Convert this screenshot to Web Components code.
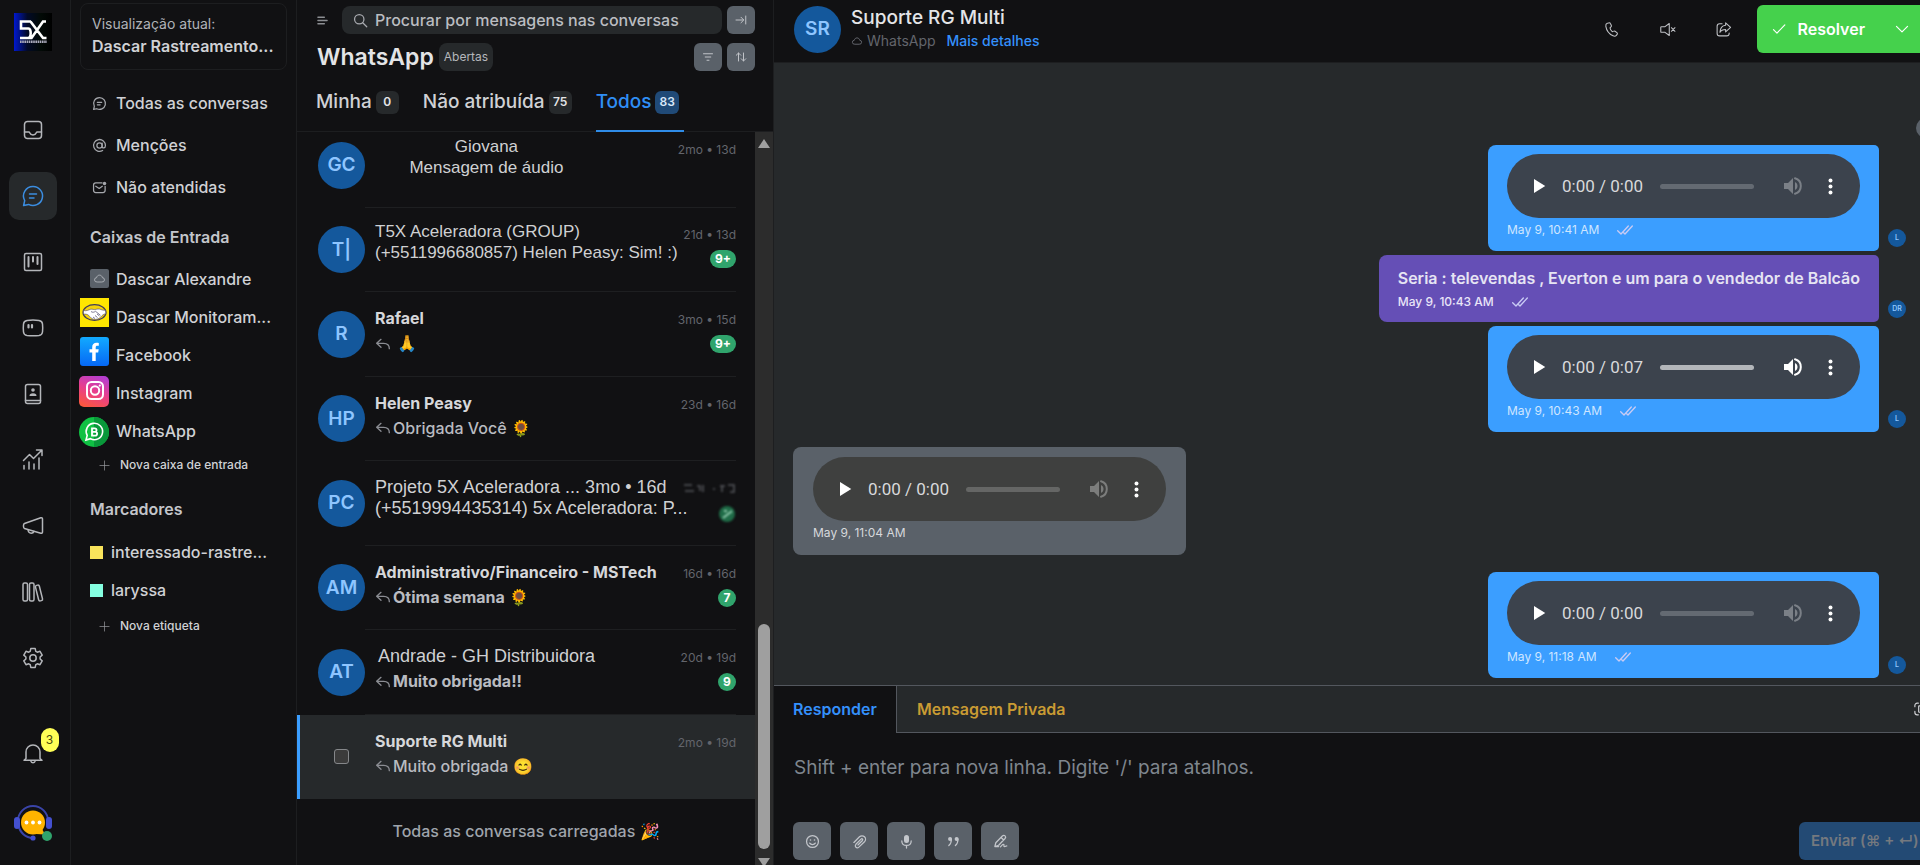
<!DOCTYPE html>
<html lang="pt-BR">
<head>
<meta charset="utf-8">
<title>Conversas - WhatsApp</title>
<style>
  :root {
    --bg: #111113;
    --panel: #26292b;
    --line: #1d1e20;
    --edge: #53575e;
    --text: #d0d1d5;
    --muted: #63656c;
    --slate: #5a6169;
    --blue: #3b9eff;
    --avatar: #14589c;
    --avatar-text: #8ec5ff;
  }
  html, body { height: 100%; margin: 0; }
  body {
    box-sizing: border-box;
    padding-bottom: 3px;
    background: #fff;
    color: var(--text);
    font: 16px/24px Inter, "Liberation Sans", sans-serif;
    overflow: hidden;
  }
</style>
</head>
<body>
<support-app></support-app>

<script>
const ICONS = {
  inbox: '<rect x="3.5" y="3.5" width="17" height="17" rx="3"/><path d="M3.5 14h4.2c.6 0 .8.3 1 .8.5 1.300 1.700 2.200 3.300 2.200s2.800-.9 3.300-2.200c.2-.5.4-.8 1-.8h4.200"/>',
  chat: '<path d="M12 2.500a9.500 9.500 0 1 1-4.400 17.900L2.600 21.500l1.100-4.900A9.500 9.500 0 0 1 12 2.500z"/><path d="M8.500 10h7M8.500 14h4.500"/>',
  kanban: '<rect x="3.500" y="3.500" width="17" height="17" rx="1.500"/><path d="M7.500 7v9.500M12 7v4.500M16.500 7v7" stroke-width="2"/>',
  captain: '<path d="M6 4.500C9.500 4 14.500 4 18 4.500c2 .3 3.300 1.500 3.500 3.500.3 2.700.3 5.300 0 8-.2 2-1.500 3.200-3.500 3.500-3.500.4-8.500.4-12 0-2-.3-3.300-1.500-3.500-3.500-.3-2.700-.3-5.300 0-8C2.700 6 4 4.800 6 4.500z"/><path d="M7.500 9v2.500M11 9v2.500" stroke-width="2.200"/>',
  contacts: '<rect x="4.500" y="2.500" width="15" height="19" rx="2"/><path d="M4.500 18.500h15"/><circle cx="12" cy="8" r="1.800" fill="currentColor" stroke="none"/><path d="M8.500 14c0-2 1-2.800 3.500-2.800s3.500.8 3.500 2.800z" fill="currentColor" stroke="none"/>',
  reports: '<path d="M3 21v-3.500M8 21v-7M13 21v-5M18 21V10M2.500 12.500l6-6 4 4 8.500-8.500M15.500 2h5.500v5.500"/>',
  megaphone: '<path d="M3.500 9.500 19.800 3.800c.9-.3 1.700.3 1.700 1.200v13c0 .9-.8 1.500-1.700 1.200L3.500 14.500c-1.400-.6-1.400-4.400 0-5z"/><path d="M7 15.800c.2 2 1.500 3.400 3.200 3.400 1.300 0 2.300-.6 2.800-1.800"/>',
  library: '<rect x="2" y="3" width="4.500" height="18" rx="1.500"/><rect x="8.500" y="3" width="4.500" height="18" rx="1.500"/><rect x="16" y="5" width="4" height="16" rx="1.500" transform="rotate(-14 18 13)"/>',
  gear: '<path d="M9.800 2.600h4.400l.6 2.700 1.500.9 2.700-.9 2.200 3.800-2.100 1.900v2l2.100 1.900-2.200 3.800-2.700-.9-1.500.9-.6 2.700H9.800l-.6-2.700-1.500-.9-2.700.9-2.200-3.800L4.900 13v-2L2.800 9.100 5 5.300l2.700.9 1.500-.9z"/><circle cx="12" cy="12" r="3.200"/>',
  bell: '<path d="M5 17.500V11a7 7 0 0 1 14 0v6.500l2 1.700H3z"/><path d="M10 20.500c.3.700 1 1.200 2 1.200s1.700-.5 2-1.200"/>',
  at: '<circle cx="12" cy="12" r="4.200"/><path d="M16.200 8v5.500c0 3.800 5.300 3 5.300-1.500A9.500 9.500 0 1 0 17 20"/>',
  mail: '<path d="M16 4.500H6A3.500 3.500 0 0 0 2.500 8v8.500A3.500 3.500 0 0 0 6 20h11.500a3.500 3.500 0 0 0 3.500-3.500V10M6 10l5.500 3.500L16.500 10"/><circle cx="20" cy="5.500" r="2.800" fill="currentColor" stroke="none"/>',
  cloud: '<path d="M7 18.500a4 4 0 0 1-.4-8c.6-3 2.800-4.700 5.400-4.700s4.800 1.700 5.400 4.700a4 4 0 0 1-.4 8z"/>',
  plus: '<path d="M12 2v20M2 12h20"/>',
  menu: '<path d="M2 5h14M2 12h20M2 19h14" stroke-width="3"/>',
  search: '<circle cx="10" cy="10" r="7.500"/><path d="m15.500 15.500 6.500 6.500"/>',
  collapse: '<path d="M2 12h15M12 6.500l5.500 5.500-5.500 5.500M21.500 4v16"/>',
  filter: '<path d="M3 5.500h18M6.500 12h11M10 18.500h4"/>',
  sort: '<path d="M7 20V4M2.500 8.500 7 4l4.500 4.500M17 4v16M12.500 15.500 17 20l4.500-4.500"/>',
  reply: '<path d="M9 5 2.500 11 9 17M2.500 11H13c5 0 8.500 3 8.500 8"/>',
  phone: '<path d="M7.600 2.800 6 3.300C4.500 3.900 3.700 5.500 4 7.500c1 6 4.600 10.800 10.200 13.400 1.900.9 3.600.6 4.700-.7l1-1.200c.6-.8.500-1.900-.3-2.500l-2.700-2c-.6-.4-1.300-.5-1.900-.2l-2 .8c-1.600-1.300-2.700-3.200-3.100-5.300L11.500 8c.4-.5.5-1.200.3-1.800L10.600 3.800C10.200 2.900 9 2.300 7.600 2.800z"/>',
  mute: '<path d="M14.500 3.500v17L8.500 16H3.500a1 1 0 0 1-1-1V9a1 1 0 0 1 1-1h5z"/><path d="m17.500 9.500 5 5m0-5-5 5"/>',
  share: '<path d="M10 4H6.500A3.500 3.500 0 0 0 3 7.500v10A3.500 3.500 0 0 0 6.500 21h10a3.500 3.500 0 0 0 3.500-3.500V17"/><path d="M15 2.500 22 9l-7 6.500V12c-4 0-6.500 1-8 4 .2-5.500 3-9.500 8-10z"/>',
  check: '<path d="m2.500 13 6 6L22 5"/>',
  chevron: '<path d="m2.500 7.500 9.500 9.500 9.500-9.500"/>',
  ticks: '<path d="m1 13 5 5L17 6M10 16l2 2L23 6"/>',
  play: '<path d="M6 3.500v17L19.500 12z" fill="currentColor" stroke="none"/>',
  volume: '<path d="M3 9v6h4l5 5V4L7 9z" fill="currentColor" stroke="none"/><path d="M14 8c1.500.7 2.500 2.200 2.500 4s-1 3.300-2.500 4z" fill="currentColor" stroke="none"/><path d="M14 4.300c3.400 1 5.800 4 5.800 7.700s-2.400 6.700-5.800 7.700" stroke-width="2"/>',
  dots: '<g fill="currentColor" stroke="none"><circle cx="12" cy="3.500" r="2.800"/><circle cx="12" cy="12" r="2.800"/><circle cx="12" cy="20.500" r="2.800"/></g>',
  smile: '<circle cx="12" cy="12" r="9.500"/><path d="M7.500 14.500c1 1.500 2.600 2.300 4.500 2.300s3.500-.8 4.500-2.300"/><circle cx="8.800" cy="9.500" r="1.300" fill="currentColor" stroke="none"/><circle cx="15.200" cy="9.500" r="1.300" fill="currentColor" stroke="none"/>',
  clip: '<path d="m3 13.500 9-9a5.500 5.500 0 0 1 8 8l-9 8.500c-3.500 3-7.500-1-4.800-4.500l8.300-8.300c1.600-1.400 3.600.4 2.200 2.100l-7.200 7.200"/>',
  mic: '<rect x="8" y="1.500" width="8" height="13" rx="4" fill="currentColor" stroke="none"/><path d="M4.500 11c0 4.500 3 7.200 7.500 7.200s7.500-2.700 7.500-7.200M12 18v4.500" stroke-width="2"/>',
  quote: '<g fill="currentColor" stroke="none"><circle cx="6.500" cy="8" r="3.200"/><circle cx="17" cy="8" r="3.200"/></g><path d="M8.700 8c0 5-1.200 8-4.200 10.500M19.200 8c0 5-1.200 8-4.200 10.500" stroke-width="2"/>',
  sign: '<path d="m3 20 1.500-6L15 3.200c3-2.700 7 1 4.300 4L9 18z M13 5.500l4 4M12 20.500c3-3.500 5-5 5.500-3.500s-1 3 1 3 1.500-1 3.500-1M3 20h6"/>',
  expand: '<path d="M1.500 8V6A4 4 0 0 1 5.500 2h2M16 2h2a4 4 0 0 1 4 4v2M1.500 16v2a4 4 0 0 0 4 4h2M16 22h2a4 4 0 0 0 4-4v-2"/><rect x="8" y="6.500" width="12" height="11" rx="1"/>'
};

function define(name, css, html) {
  customElements.define(name, class extends HTMLElement {
    constructor() {
      super();
      const root = this.attachShadow({ mode: 'open' });
      const markup = typeof html === 'function' ? html(this) : html;
      root.innerHTML = `<style>*{box-sizing:border-box}button{font:inherit;color:inherit;border:0;margin:0;padding:0;cursor:pointer}a{color:inherit;text-decoration:none}${css}</style>${markup}`;
    }
  });
}

/* Line icon: <ui-icon name="chat" style="--s:20px"> */
define('ui-icon', `
  :host { display: inline-block; flex: none; width: var(--s, 24px); height: var(--s, 24px); }
  svg { display: block; width: 100%; height: 100%; overflow: visible; fill: none; stroke: currentColor; stroke-width: var(--w, 1.5); stroke-linecap: round; stroke-linejoin: round; }
`, el => `<svg viewBox="0 0 24 24" aria-hidden="true">${ICONS[el.getAttribute('name')]}</svg>`);

/* Round avatar with initials */
define('user-avatar', `
  :host { display: grid; place-items: center; flex: none; width: 47px; height: 47px; border-radius: 50%; background: var(--avatar); color: var(--avatar-text); font-size: 19px; line-height: 20px; font-weight: 600; }
  :host([small]) { width: 18px; height: 18px; font-size: 7px; line-height: 8px; }
`, '<slot></slot>');

define('nav-rail', `
  :host { display: flex; flex-direction: column; align-items: center; width: 71px; padding: 13px 5px 22px 0; border-right: 1px solid var(--line); color: #b4b6ba; }
  .logo { width: 38px; height: 38px; margin-bottom: 55px; }
  .logo svg, .me svg { display: block; }
  nav { display: flex; flex-direction: column; gap: 18px; }
  nav a, .bell { display: grid; place-items: center; width: 48px; height: 48px; border-radius: 10px; }
  nav a.on { background: var(--panel); color: #3b8de0; }
  .bell { position: relative; background: none; margin-top: auto; }
  .bell span { position: absolute; left: 32px; top: -1px; width: 18px; height: 24px; border-radius: 9px; background: #ffff57; color: #47490f; font-size: 12px; line-height: 24px; text-align: center; }
  .me { margin-top: 28px; background: none; }
`, `
  <a class="logo" href="#" aria-label="5X">
    <svg width="38" height="38" viewBox="0 0 38 38"><defs><linearGradient id="g"><stop offset="0" stop-color="#0018d0"/><stop offset=".35" stop-color="#020a28"/><stop offset=".7" stop-color="#020a06"/><stop offset="1" stop-color="#000"/></linearGradient></defs>
    <rect width="38" height="38" fill="url(#g)"/><path d="M17 8.500H7v7h7.500c3 0 3 9.500-.5 9.500H6M16.500 8.500l12.500 16.500h3.500M32 8.500h-3L17.500 25H14" fill="none" stroke="#fff" stroke-width="2.600"/><path d="M6 28.700h27" stroke="#aab" stroke-width="2.400" stroke-dasharray="1.600 .6"/></svg>
  </a>
  <nav>
    <a href="#" aria-label="Caixa de entrada"><ui-icon name="inbox"></ui-icon></a>
    <a href="#" aria-label="Conversas" class="on"><ui-icon name="chat"></ui-icon></a>
    <a href="#" aria-label="Kanban"><ui-icon name="kanban"></ui-icon></a>
    <a href="#" aria-label="Assistente"><ui-icon name="captain"></ui-icon></a>
    <a href="#" aria-label="Contatos"><ui-icon name="contacts"></ui-icon></a>
    <a href="#" aria-label="Relatórios"><ui-icon name="reports"></ui-icon></a>
    <a href="#" aria-label="Campanhas"><ui-icon name="megaphone"></ui-icon></a>
    <a href="#" aria-label="Central de ajuda"><ui-icon name="library"></ui-icon></a>
    <a href="#" aria-label="Configurações"><ui-icon name="gear"></ui-icon></a>
  </nav>
  <button class="bell" aria-label="Notificações"><ui-icon name="bell"></ui-icon><span>3</span></button>
  <button class="me" aria-label="Perfil">
    <svg width="38" height="38" viewBox="0 0 38 38"><path d="M4 16a15 15 0 0 1 30 0M4.500 20A15 15 0 0 0 19 33" fill="none" stroke="#3a44a8" stroke-width="2"/><rect x="0" y="12" width="6" height="12" rx="3" fill="#4450d0"/><rect x="32" y="12" width="6" height="12" rx="3" fill="#4450d0"/><circle cx="19" cy="33" r="2.600" fill="#4450d0"/><circle cx="19" cy="17.500" r="12" fill="#ffb300"/><path d="m27 22 4 7.500-9-.5z" fill="#ffb300"/><g fill="#fff"><circle cx="12.500" cy="17.500" r="1.900"/><circle cx="19" cy="17.500" r="1.900"/><circle cx="25.500" cy="17.500" r="1.900"/></g><circle cx="33" cy="31" r="5" fill="#30a46c"/></svg>
  </button>
`);

define('side-menu', `
  :host { display: block; width: 226px; padding: 3px 9px 0; border-right: 1px solid var(--line); font-weight: 500; }
  .view { display: block; height: 67px; padding: 9px 11px; border: 1px solid var(--line); border-radius: 8px; }
  .view small { display: block; font-size: 14px; line-height: 22px; font-weight: 400; color: #b0b3b8; }
  .view b { display: block; font-weight: 600; font-size: 16px; line-height: 22px; }
  a { white-space: nowrap; }
  .main { margin-top: 12px; }
  .main a { display: flex; align-items: center; gap: 9px; height: 42px; padding-left: 12px; }
  .main ui-icon { --s: 15px; --w: 2; color: #a5a7ac; }
  h2 { margin: 0; padding-left: 10px; font-size: 16px; line-height: 24px; font-weight: 600; color: #c3c5ca; }
  .main + h2 { margin-top: 17px; }
  .inboxes { display: grid; grid-template-columns: 30px 1fr; column-gap: 7px; margin: 11px 0 0 -1px; }
  .pics { display: flex; flex-direction: column; align-items: flex-end; gap: 10px; padding-top: 9px; }
  .pics svg { display: block; }
  .pics span { display: grid; place-items: center; width: 19px; height: 19px; border-radius: 2px; background: var(--slate); color: #b9bcc1; }
  .pics span ui-icon { --s: 13px; }
  .names a { display: block; line-height: 38px; }
  .new { display: flex; align-items: center; gap: 10px; padding-left: 19px; height: 30px; font-size: 12px; font-weight: 500; background: none; }
  .new ui-icon { --s: 11px; color: #9a9ca1; }
  .new + h2 { margin-top: 17px; }
  .tags { margin: 12px 0 2px; }
  .tags a { display: flex; align-items: center; gap: 8px; height: 38px; padding-left: 10px; }
  .tags i { width: 13px; height: 13px; background: var(--c); }
`, `
  <a class="view" href="#"><small>Visualização atual:</small><b>Dascar Rastreamento...</b></a>
  <nav class="main">
    <a href="#"><ui-icon name="chat"></ui-icon>Todas as conversas</a>
    <a href="#"><ui-icon name="at"></ui-icon>Menções</a>
    <a href="#"><ui-icon name="mail"></ui-icon>Não atendidas</a>
  </nav>
  <h2>Caixas de Entrada</h2>
  <div class="inboxes">
    <div class="pics">
      <span><ui-icon name="cloud"></ui-icon></span>
      <svg width="29" height="29" viewBox="0 0 29 29"><rect width="29" height="29" fill="#ffe600"/><ellipse cx="14.500" cy="14.500" rx="11.500" ry="7.800" fill="#f4d20c" stroke="#3f3a5a" stroke-width="1.200"/><path d="M3.500 12.500c3 .8 5-.6 7-1.200 1.500-.4 2.800.3 4 .3s3-.9 5-.5c2 .5 3.500 1.600 6 1.100l.3 3.600c-2 0-3.500 1.300-5 3.200-2 2.200-5 2.600-7 2.200-2.500-.5-4-2.500-5.300-4-1.300-1-3-1.200-5-1.100z" fill="#fff" stroke="#4a466a" stroke-width=".6"/><path d="M11 13.500c1.500 1.200 3 .8 4.500-.2l5 4M13 19l2 1.500M15 17.500l2.500 2M17 16l2.500 2" stroke="#4a466a" stroke-width=".7" fill="none"/></svg>
      <svg width="29" height="29" viewBox="0 0 29 29"><defs><linearGradient id="f" x2="0" y2="1"><stop stop-color="#12aaff"/><stop offset="1" stop-color="#0668f5"/></linearGradient></defs><rect width="29" height="29" rx="3" fill="url(#f)"/><path d="M12.200 24v-8.500H9.500v-3.300h2.700v-2c0-3 1.600-4.500 4.400-4.500.9 0 1.600.1 2.200.2v2.900h-1.500c-1.200 0-1.600.6-1.600 1.600v1.800h3l-.5 3.300h-2.500V24z" fill="#fff"/></svg>
      <svg width="30" height="31" viewBox="0 0 30 31"><defs><linearGradient id="i" x1=".7" x2=".3" y2="1"><stop stop-color="#b63ed0"/><stop offset=".5" stop-color="#e83f8c"/><stop offset="1" stop-color="#fb5640"/></linearGradient></defs><rect width="30" height="31" rx="5" fill="url(#i)"/><g fill="none" stroke="#fff" stroke-width="2"><rect x="8" y="6" width="16" height="17" rx="4.500"/><circle cx="16" cy="14.500" r="4.200"/></g><circle cx="20.800" cy="9.600" r="1.100" fill="#fff"/></svg>
      <svg width="30" height="30" viewBox="0 0 30 30"><circle cx="15" cy="15" r="15" fill="#0fc143"/><path d="M15 0a15 15 0 0 1 0 30z" fill="#09983a"/><path d="M7 23l1.200-4.600a8.200 8.200 0 1 1 3.300 3.300z" fill="none" stroke="#fff" stroke-width="1.600"/><path d="M13 11.300h2.800a1.700 1.700 0 0 1 0 3.500H13zm0 3.500h3.200a1.900 1.900 0 0 1 0 3.800H13z" fill="none" stroke="#fff" stroke-width="1.800"/></svg>
    </div>
    <div class="names">
      <a href="#">Dascar Alexandre</a>
      <a href="#">Dascar Monitoram...</a>
      <a href="#">Facebook</a>
      <a href="#">Instagram</a>
      <a href="#">WhatsApp</a>
    </div>
  </div>
  <button class="new"><ui-icon name="plus"></ui-icon>Nova caixa de entrada</button>
  <h2>Marcadores</h2>
  <div class="tags">
    <a href="#"><i style="--c:#f9e45b"></i>interessado-rastre...</a>
    <a href="#"><i style="--c:#85ffe0"></i>laryssa</a>
  </div>
  <button class="new"><ui-icon name="plus"></ui-icon>Nova etiqueta</button>
`);

define('conversation-item', `
  :host { display: flex; min-width: 0; min-height: 0; padding-right: 19px; border-left: 3px solid transparent; }
  .lead { display: grid; place-items: center; flex: none; width: 65px; padding-left: 18px; }
  .body { flex: 1; min-width: 0; display: flex; gap: 4px; padding: 14px 0 0 10px; border-bottom: 1px solid #1e1f21; white-space: nowrap; }
  .text { flex: 1; min-width: 0; font-size: 16px; line-height: 25px; font-weight: 500; color: #b9bbc0; }
  .text b { display: block; font-weight: 700; color: #d6d7da; }
  .msg { display: flex; align-items: center; gap: 2px; }
  .msg ui-icon { --s: 16px; --w: 2; color: #8b8d93; }
  :host([unread]) .msg { font-weight: 700; }
  .side { display: flex; flex-direction: column; align-items: flex-end; gap: 3px; padding-top: 1px; color: var(--muted); font-size: 12px; line-height: 25px; }
  ::slotted([slot=count]) { min-width: 18px; height: 18px; padding: 0 5px; border-radius: 9px; background: #30a46c; color: #fff; font-size: 12px; line-height: 18px; font-weight: 700; text-align: center; }
  :host([plain]) .text { font-family: "Liberation Sans", Arial, sans-serif; font-size: 17px; line-height: 21px; font-weight: 400; color: #cfd0d2; }
  :host([plain]) .text b { font-weight: 400; color: inherit; }
  :host([plain=""]) .body, :host([plain=center]) .body { padding-top: 13px; }
  :host([plain=large]) .text { font-size: 18px; padding-top: 2px; }
  :host([plain=center]) .text { padding-right: 76px; text-align: center; }
  :host([plain=center]) .msg { justify-content: center; }
  :host([plain=name]) .text b { font: 18px/25px "Liberation Sans", Arial, sans-serif; padding-left: 3px; color: #cfd0d2; }
  :host([plain=name]) .text { font: inherit; line-height: 25px; color: #b9bbc0; }
  :host([selected]) { background: var(--panel); border-left-color: var(--blue); }
  :host([selected]) .body { border-color: transparent; }
`, el => `
  <div class="lead"><slot name="lead"></slot></div>
  <div class="body">
    <div class="text"><b><slot name="name"></slot></b><div class="msg">${el.hasAttribute('noreply') ? '' : '<ui-icon name="reply"></ui-icon>'}<slot></slot></div></div>
    <div class="side"><slot name="time"></slot><slot name="count"></slot></div>
  </div>
`);

define('scroll-track', `
  :host { display: flex; flex-direction: column; align-items: center; width: 18px; background: #2c2c2c; }
  i { width: 0; height: 0; border: 6px solid transparent; }
  .up { border-top: 0; border-bottom: 9px solid #9f9f9f; margin-top: 7px; }
  .down { border-bottom: 0; border-top: 9px solid #9f9f9f; margin-bottom: -2px; }
  .track { flex: 1; width: 12px; display: flex; flex-direction: column; padding: 9px 0; }
  .space { flex: 469; }
  .thumb { flex: 226; border-radius: 6px; background: #9f9f9f; }
`, `<i class="up"></i><div class="track"><div class="space"></div><div class="thumb"></div></div><i class="down"></i>`);

define('conversation-list', `
  :host { display: flex; flex-direction: column; width: 477px; border-right: 1px solid var(--line); }
  header { padding: 6px 18px 0 20px; }
  .row { display: flex; align-items: center; gap: 5px; height: 28px; }
  .row + .row { margin-top: 9px; }
  .menu { background: none; margin-right: 9px; display: flex; }
  .menu ui-icon { --s: 11px; color: #8c8e92; }
  .search { flex: 1; display: flex; align-items: center; gap: 7px; height: 28px; padding: 0 11px; border-radius: 8px; background: var(--panel); font-weight: 500; }
  .search ui-icon { --s: 15px; --w: 2; color: #a9abb0; }
  input[type=search] { flex: 1; min-width: 0; border: 0; padding: 0; outline: 0; background: none; color: inherit; font: inherit; }
  input::placeholder { color: #bbbdc1; opacity: 1; }
  .sq { display: grid; place-items: center; width: 28px; height: 28px; border-radius: 6px; background: var(--slate); color: #c0c3c8; }
  .sq ui-icon { --s: 12px; --w: 2; }
  h1 { margin: 0; font-size: 23px; line-height: 28px; font-weight: 600; color: #e3e4e6; }
  .state { height: 28px; padding: 0 5px; border-radius: 8px; background: var(--panel); color: #b5b7bb; font-size: 12px; line-height: 28px; }
  .grow { flex: 1; }
  .tabs { display: flex; gap: 22px; height: 61px; padding: 0 19px; border-bottom: 1px solid var(--line); font-size: 19px; font-weight: 500; white-space: nowrap; }
  .tabs button { display: flex; align-items: center; gap: 4px; background: none; height: 61px; padding-top: 3px; border-bottom: 2px solid transparent; padding-right: 2px; }
  .tabs button.on { color: #2f8ef5; border-color: #2f8ce8; padding-right: 5px; }
  .tabs em { min-width: 23px; height: 23px; padding: 0 4px; border-radius: 6px; background: var(--panel); color: #e4e5e7; font: 600 12px/21px Inter, sans-serif; text-align: center; }
  .tabs .on em { background: #204a77; color: #dbe9fa; }
  .scroll { flex: 1; min-height: 0; display: flex; overflow: hidden; }
  .list { flex: 1; min-width: 0; display: flex; flex-direction: column; margin-top: -9px; }
  .items { flex: 1; min-height: 0; display: grid; grid-template-columns: minmax(0, 1fr); grid-auto-rows: 1fr; }
  .end { margin: 0; height: 66px; line-height: 64px; text-align: center; font-weight: 500; color: #9fa4ab; }
  input[type=checkbox] { appearance: none; width: 15px; height: 15px; margin: 0; border: 1px solid #85878a; border-radius: 3px; background: #3b3b3b; }
  .smudge { display: block; filter: blur(1px); }
`, `
  <header>
    <div class="row">
      <button class="menu" aria-label="Menu"><ui-icon name="menu"></ui-icon></button>
      <label class="search"><ui-icon name="search"></ui-icon><input type="search" aria-label="Procurar" placeholder="Procurar por mensagens nas conversas"></label>
      <button class="sq" aria-label="Recolher"><ui-icon name="collapse"></ui-icon></button>
    </div>
    <div class="row">
      <h1>WhatsApp</h1><span class="state">Abertas</span><span class="grow"></span>
      <button class="sq" aria-label="Filtrar"><ui-icon name="filter"></ui-icon></button>
      <button class="sq" aria-label="Ordenar"><ui-icon name="sort"></ui-icon></button>
    </div>
  </header>
  <div class="tabs">
    <button>Minha <em>0</em></button>
    <button>Não atribuída <em>75</em></button>
    <button class="on">Todos <em>83</em></button>
  </div>
  <div class="scroll">
    <div class="list">
      <div class="items">
        <conversation-item plain="center" noreply><user-avatar slot="lead">GC</user-avatar><span slot="name">Giovana</span>Mensagem de áudio<span slot="time">2mo • 13d</span></conversation-item>
        <conversation-item plain noreply><user-avatar slot="lead">T|</user-avatar><span slot="name">T5X Aceleradora (GROUP)</span>(+5511996680857) Helen Peasy: Sim! :)<span slot="time">21d • 13d</span><span slot="count">9+</span></conversation-item>
        <conversation-item><user-avatar slot="lead">R</user-avatar><span slot="name">Rafael</span>&nbsp;🙏<span slot="time">3mo • 15d</span><span slot="count">9+</span></conversation-item>
        <conversation-item><user-avatar slot="lead">HP</user-avatar><span slot="name">Helen Peasy</span>Obrigada Você 🌻<span slot="time">23d • 16d</span></conversation-item>
        <conversation-item plain="large" noreply><user-avatar slot="lead">PC</user-avatar><span slot="name">Projeto 5X Aceleradora ... 3mo • 16d</span>(+5519994435314) 5x Aceleradora: P...<svg slot="time" class="smudge" width="52" height="48" viewBox="0 0 52 48"><path d="M0 9h8M1 15h9M13 10h3v5M19 9v7M29 13h2M36 10h5M38 10v6M44 9h6v7h-4" fill="none" stroke="#55575c" stroke-width="1.500"/><circle cx="43" cy="38" r="8" fill="#1f6b47"/><path d="M39 42l9-7M40 35h3" stroke="#8fc9ac" stroke-width="2"/></svg></conversation-item>
        <conversation-item unread><user-avatar slot="lead">AM</user-avatar><span slot="name">Administrativo/Financeiro - MSTech</span>Ótima semana 🌻<span slot="time">16d • 16d</span><span slot="count">7</span></conversation-item>
        <conversation-item plain="name" unread><user-avatar slot="lead">AT</user-avatar><span slot="name">Andrade - GH Distribuidora</span>Muito obrigada!!<span slot="time">20d • 19d</span><span slot="count">9</span></conversation-item>
        <conversation-item selected><input slot="lead" type="checkbox" aria-label="Selecionar Suporte RG Multi"><span slot="name">Suporte RG Multi</span>Muito obrigada 😊<span slot="time">2mo • 19d</span></conversation-item>
      </div>
      <p class="end">Todas as conversas carregadas 🎉</p>
    </div>
    <scroll-track></scroll-track>
  </div>
`);

define('audio-player', `
  :host { display: flex; align-items: center; width: 353px; height: 64px; padding: 0 20px 0 22px; border-radius: 32px; background: #3c434d; color: #fff; font-family: Roboto, sans-serif; font-size: 17px; font-weight: 400; }
  :host([tone=grey]) { background: #3f403f; }
  button { display: grid; place-items: center; width: 20px; height: 24px; background: none; }
  button ui-icon { --s: 20px; }
  time { margin-left: 13px; color: #d8d9db; white-space: nowrap; }
  input { appearance: none; flex: 1; min-width: 0; height: 5px; margin: 0 27px 0 17px; border-radius: 3px; background: #646a72; }
  input::-webkit-slider-thumb { appearance: none; width: 0; height: 0; }
  .vol { color: #7b8087; }
  .vol ui-icon { --s: 24px; }
  :host([loaded]) input { background: #b3b6ba; }
  :host([loaded]) .vol { color: #fff; }
  :host([tone=grey]) input { background: #656665; }
  :host([tone=grey]) .vol { color: #7c7d7c; }
  .more { margin-left: 19px; }
  .more ui-icon { --s: 17px; }
`, el => `
  <button aria-label="Reproduzir"><ui-icon name="play"></ui-icon></button>
  <time>${el.getAttribute('time')}</time>
  <input type="range" value="0" aria-label="Progresso">
  <button class="vol" aria-label="Volume"><ui-icon name="volume"></ui-icon></button>
  <button class="more" aria-label="Mais"><ui-icon name="dots"></ui-icon></button>
`);

define('chat-message', `
  :host { display: flex; align-items: flex-end; justify-content: flex-end; gap: 9px; font-weight: 600; }
  .bubble { padding: 9px 19px 11px; border-radius: 8px 5px 5px 8px; background: var(--blue); color: #e6e4f3; }
  :host([kind=in]) { justify-content: flex-start; }
  :host([kind=in]) .bubble { padding: 10px 20px 12px; border-radius: 8px; background: var(--slate); }
  :host([kind=note]) .bubble { background: #654fb6; padding: 11px 19px 10px; }
  .meta { display: flex; align-items: center; gap: 18px; height: 20px; margin-top: 2px; font-size: 12px; font-weight: 400; line-height: 20px; color: #cfe6ff; }
  :host([kind=in]) .meta { color: #d6d8dc; }
  :host([kind=note]) .meta { color: #e9e5f8; font-weight: 500; }
  .meta ui-icon { --s: 16px; --w: 2; color: #c9cbf4; }
  ::slotted(user-avatar) { margin-bottom: 4px; }
`, el => `
  <div class="bubble"><slot></slot><div class="meta"><span>${el.getAttribute('at')}</span>${el.getAttribute('kind') === 'in' ? '' : '<ui-icon name="ticks"></ui-icon>'}</div></div>
  <slot name="who"></slot>
`);

define('reply-box', `
  :host { display: flex; flex-direction: column; height: 180px; border-top: 1px solid var(--edge); overflow: hidden; }
  .tabs { display: flex; height: 47px; font-size: 16px; font-weight: 600; }
  .tabs button { background: none; line-height: 45px; }
  .reply { width: 123px; color: #3490fb; border-right: 1px solid var(--edge) !important; }
  .rest { flex: 1; display: flex; align-items: center; justify-content: space-between; padding-left: 20px; background: var(--panel); border-bottom: 1px solid var(--edge); }
  .rest .note { color: #c99b33; }
  .rest .expand { display: flex; width: 6px; }
  .expand ui-icon { --s: 14px; --w: 2; }
  textarea { flex: 1; min-height: 0; border: 0; outline: 0; resize: none; padding: 23px 20px 0; background: none; color: inherit; font: 19px/24px Inter, sans-serif; overflow: hidden; }
  textarea::placeholder { color: #7f868e; opacity: 1; }
  .tools { display: flex; gap: 9px; padding: 0 0 5px 19px; }
  .tools button { display: grid; place-items: center; width: 38px; height: 38px; border-radius: 6px; background: var(--slate); color: #c3c6cb; }
  .tools ui-icon { --s: 15px; --w: 2; }
  .tools .send { display: block; width: 140px; margin: 0 -19px 0 auto; padding-left: 12px; text-align: left; background: #234a74; color: #75797f; font-size: 15px; font-weight: 600; white-space: nowrap; }
`, `
  <div class="tabs">
    <button class="reply">Responder</button>
    <div class="rest"><button class="note">Mensagem Privada</button><button class="expand" aria-label="Expandir"><ui-icon name="expand"></ui-icon></button></div>
  </div>
  <textarea aria-label="Mensagem" placeholder="Shift + enter para nova linha. Digite '/' para atalhos."></textarea>
  <div class="tools">
    <button aria-label="Emoji"><ui-icon name="smile"></ui-icon></button>
    <button aria-label="Anexar"><ui-icon name="clip"></ui-icon></button>
    <button aria-label="Gravar áudio"><ui-icon name="mic"></ui-icon></button>
    <button aria-label="Citação"><ui-icon name="quote"></ui-icon></button>
    <button aria-label="Assinatura"><ui-icon name="sign"></ui-icon></button>
    <button class="send">Enviar (⌘ + ↵)</button>
  </div>
`);

define('chat-view', `
  :host { position: relative; flex: 1; min-width: 0; display: flex; flex-direction: column; overflow: hidden; }
  header { display: flex; align-items: center; height: 63px; padding: 0 0 4px 20px; border-bottom: 1px solid var(--line); }
  .who { margin-left: 10px; }
  h2 { margin: 0; font-size: 19px; line-height: 24px; font-weight: 500; color: #e4e5e8; }
  .sub { display: flex; align-items: center; font-size: 14px; line-height: 22px; color: var(--muted); }
  .sub ui-icon { --s: 12px; --w: 2; margin-right: 4px; }
  .sub a { margin-left: 11px; color: #3490fb; font-weight: 500; }
  .acts { display: flex; gap: 38px; margin: 0 24px 0 auto; }
  .acts button { display: grid; place-items: center; width: 18px; height: 24px; background: none; color: #c0c2c6; }
  .acts ui-icon { --s: 17px; }
  .resolve { display: flex; flex: none; height: 48px; margin-right: -9px; border-radius: 6px; background: #45d14c; color: #fff; font-weight: 600; }
  .resolve button { display: flex; align-items: center; gap: 12px; padding: 0 15px; background: none; font-size: 16px; }
  .resolve ui-icon { --s: 14px; --w: 2; }
  .resolve button + button { padding: 0 20px 0 15px; }
  .feed { flex: 1; min-height: 0; display: flex; flex-direction: column; justify-content: flex-end; gap: 17px; padding: 0 14px 7px 19px; background: var(--panel); overflow: hidden; }
  .group { display: flex; flex-direction: column; gap: 4px; margin-bottom: -2px; }
  .knob { position: absolute; right: -16px; top: 118px; width: 20px; height: 20px; border-radius: 50%; background: var(--slate); }
`, `
  <header>
    <user-avatar>SR</user-avatar>
    <div class="who">
      <h2>Suporte RG Multi</h2>
      <div class="sub"><ui-icon name="cloud"></ui-icon>WhatsApp<a href="#">Mais detalhes</a></div>
    </div>
    <div class="acts">
      <button aria-label="Ligar"><ui-icon name="phone"></ui-icon></button>
      <button aria-label="Silenciar"><ui-icon name="mute"></ui-icon></button>
      <button aria-label="Compartilhar"><ui-icon name="share"></ui-icon></button>
    </div>
    <div class="resolve"><button><ui-icon name="check"></ui-icon>Resolver</button><button aria-label="Mais opções"><ui-icon name="chevron"></ui-icon></button></div>
  </header>
  <div class="feed">
    <div class="group">
      <chat-message at="May 9, 10:41 AM"><audio-player time="0:00 / 0:00"></audio-player><user-avatar slot="who" small>L</user-avatar></chat-message>
      <chat-message kind="note" at="May 9, 10:43 AM">Seria : televendas , Everton e um para o vendedor de Balcão<user-avatar slot="who" small>DR</user-avatar></chat-message>
      <chat-message at="May 9, 10:43 AM"><audio-player loaded time="0:00 / 0:07"></audio-player><user-avatar slot="who" small>L</user-avatar></chat-message>
    </div>
    <chat-message kind="in" at="May 9, 11:04 AM"><audio-player tone="grey" time="0:00 / 0:00"></audio-player></chat-message>
    <chat-message at="May 9, 11:18 AM"><audio-player time="0:00 / 0:00"></audio-player><user-avatar slot="who" small>L</user-avatar></chat-message>
  </div>
  <reply-box></reply-box>
  <button class="knob" aria-label="Abrir painel"></button>
`);

define('support-app', `
  :host { display: flex; height: 100%; background: var(--bg); }
  nav-rail, side-menu, conversation-list { flex: none; }
`, `<nav-rail></nav-rail><side-menu></side-menu><conversation-list></conversation-list><chat-view></chat-view>`);
</script>
</body>
</html>
